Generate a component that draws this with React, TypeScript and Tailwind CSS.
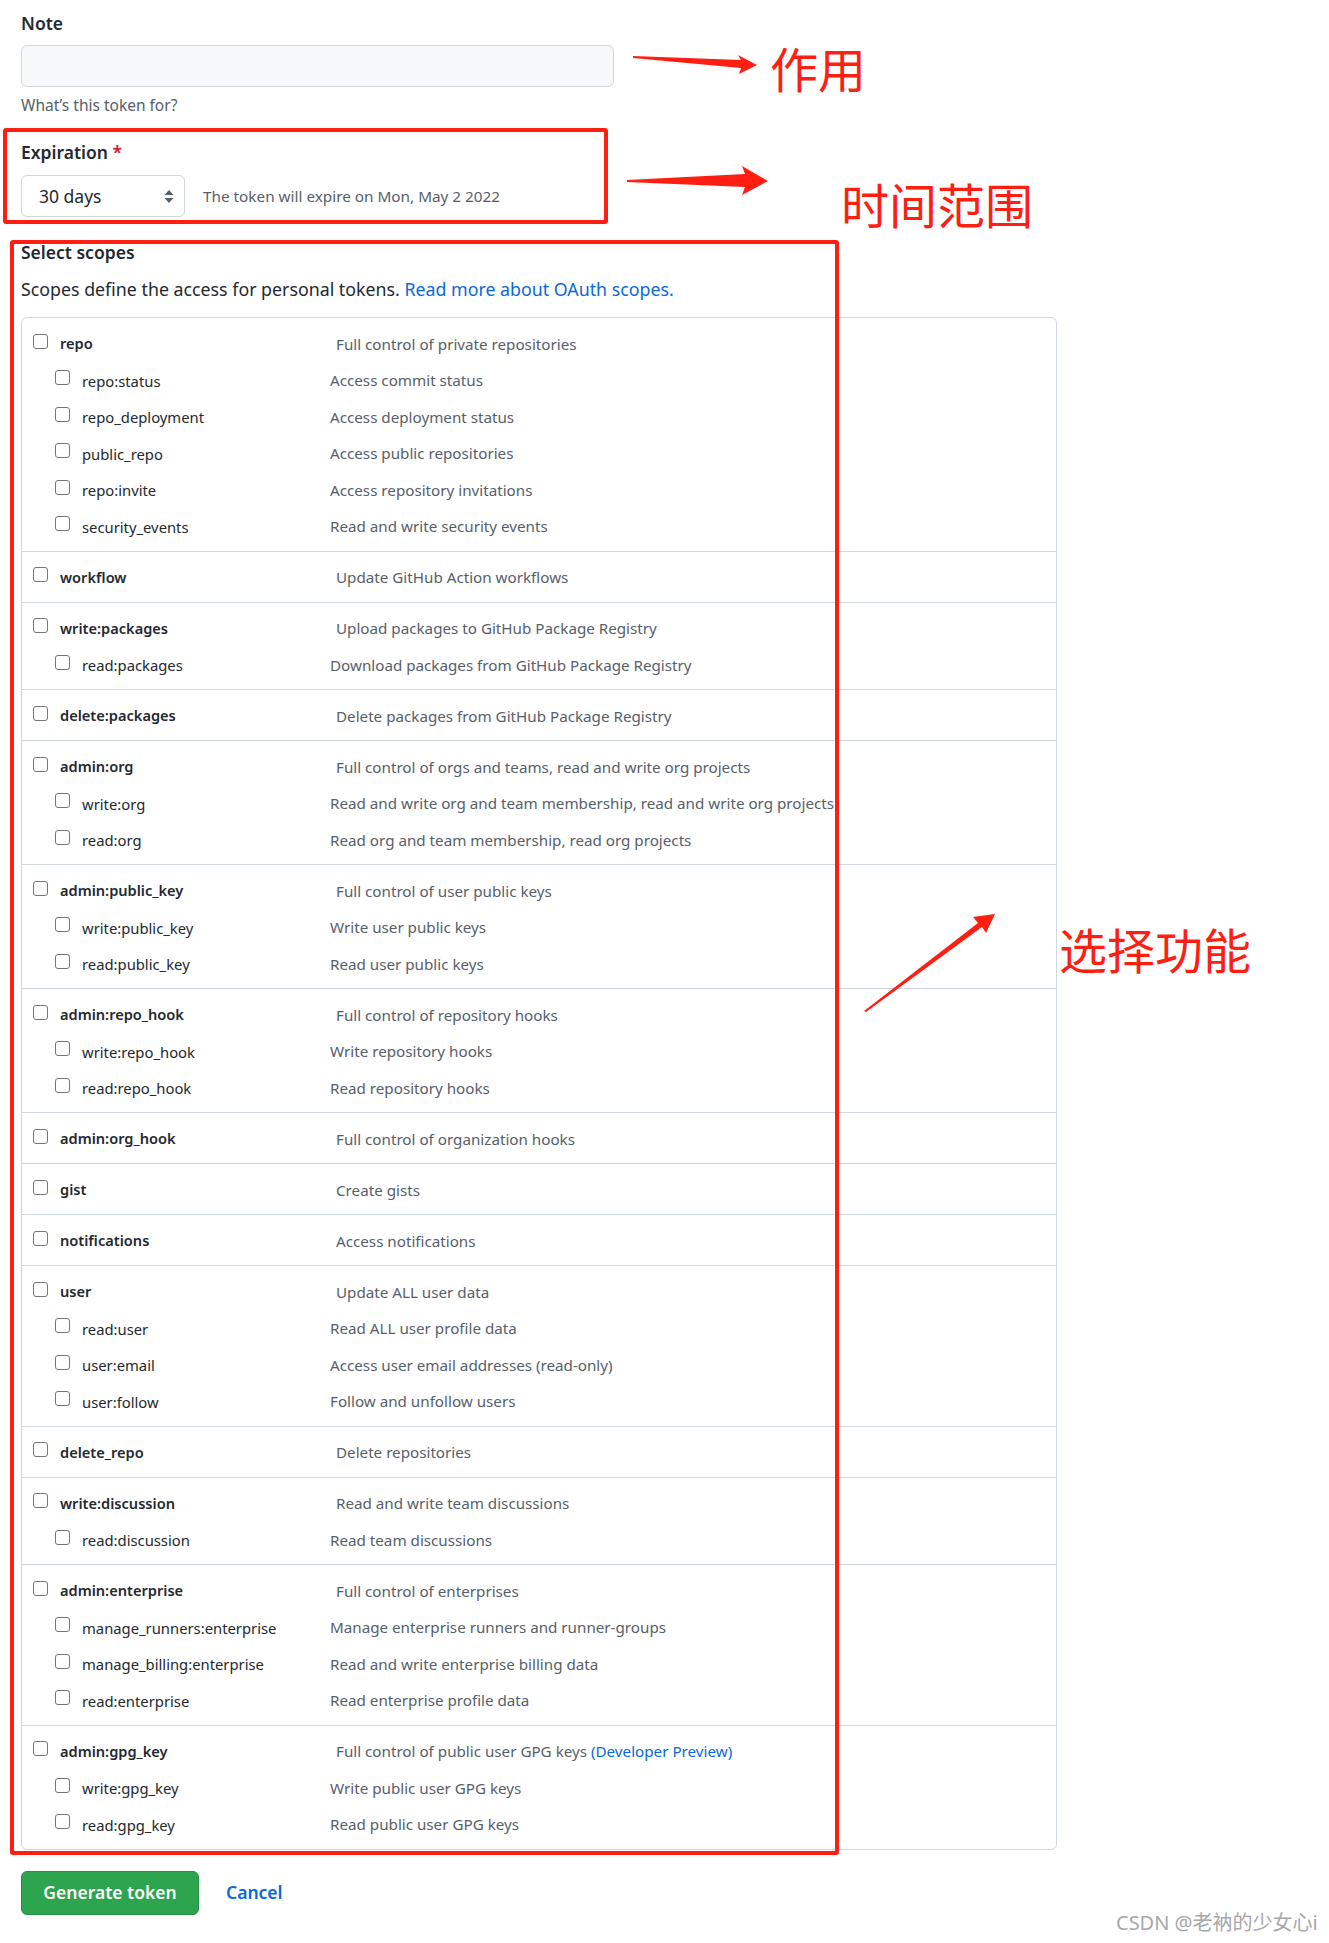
import React from 'react';

type Scope = { name: string; desc: React.ReactNode; subs?: { name: string; desc: string }[] };

const scopes: Scope[] = [
  {
    name: 'repo',
    desc: 'Full control of private repositories',
    subs: [
      { name: 'repo:status', desc: 'Access commit status' },
      { name: 'repo_deployment', desc: 'Access deployment status' },
      { name: 'public_repo', desc: 'Access public repositories' },
      { name: 'repo:invite', desc: 'Access repository invitations' },
      { name: 'security_events', desc: 'Read and write security events' },
    ],
  },
  { name: 'workflow', desc: 'Update GitHub Action workflows' },
  {
    name: 'write:packages',
    desc: 'Upload packages to GitHub Package Registry',
    subs: [{ name: 'read:packages', desc: 'Download packages from GitHub Package Registry' }],
  },
  { name: 'delete:packages', desc: 'Delete packages from GitHub Package Registry' },
  {
    name: 'admin:org',
    desc: 'Full control of orgs and teams, read and write org projects',
    subs: [
      { name: 'write:org', desc: 'Read and write org and team membership, read and write org projects' },
      { name: 'read:org', desc: 'Read org and team membership, read org projects' },
    ],
  },
  {
    name: 'admin:public_key',
    desc: 'Full control of user public keys',
    subs: [
      { name: 'write:public_key', desc: 'Write user public keys' },
      { name: 'read:public_key', desc: 'Read user public keys' },
    ],
  },
  {
    name: 'admin:repo_hook',
    desc: 'Full control of repository hooks',
    subs: [
      { name: 'write:repo_hook', desc: 'Write repository hooks' },
      { name: 'read:repo_hook', desc: 'Read repository hooks' },
    ],
  },
  { name: 'admin:org_hook', desc: 'Full control of organization hooks' },
  { name: 'gist', desc: 'Create gists' },
  { name: 'notifications', desc: 'Access notifications' },
  {
    name: 'user',
    desc: 'Update ALL user data',
    subs: [
      { name: 'read:user', desc: 'Read ALL user profile data' },
      { name: 'user:email', desc: 'Access user email addresses (read-only)' },
      { name: 'user:follow', desc: 'Follow and unfollow users' },
    ],
  },
  { name: 'delete_repo', desc: 'Delete repositories' },
  {
    name: 'write:discussion',
    desc: 'Read and write team discussions',
    subs: [{ name: 'read:discussion', desc: 'Read team discussions' }],
  },
  {
    name: 'admin:enterprise',
    desc: 'Full control of enterprises',
    subs: [
      { name: 'manage_runners:enterprise', desc: 'Manage enterprise runners and runner-groups' },
      { name: 'manage_billing:enterprise', desc: 'Read and write enterprise billing data' },
      { name: 'read:enterprise', desc: 'Read enterprise profile data' },
    ],
  },
  {
    name: 'admin:gpg_key',
    desc: (
      <>
        Full control of public user GPG keys <span className="text-[#0969da]">(Developer Preview)</span>
      </>
    ),
    subs: [
      { name: 'write:gpg_key', desc: 'Write public user GPG keys' },
      { name: 'read:gpg_key', desc: 'Read public user GPG keys' },
    ],
  },
];

const Checkbox = () => (
  <span className="block h-[15px] w-[15px] shrink-0 -translate-y-[3px] rounded-[3px] border border-[#767676] bg-white" />
);

const Row = ({ name, desc, sub }: { name: string; desc: React.ReactNode; sub?: boolean }) => (
  <div className="flex h-[36.5px] items-center whitespace-nowrap">
    <div className={sub ? 'flex w-[308px] items-center pl-[33px]' : 'flex w-[314px] items-center pl-[11px]'}>
      <Checkbox />
      <span
        className={
          sub
            ? 'ml-[12px] text-[14.8px] text-[#24292f]'
            : 'ml-[12px] text-[14.6px] font-semibold text-[#24292f]'
        }
      >
        {name}
      </span>
    </div>
    <span className="text-[15.2px] text-[#57606a]">{desc}</span>
  </div>
);

const Annotations = () => (
  <>
    <div className="pointer-events-none absolute left-[3px] top-[128px] h-[96px] w-[605px] rounded-[3px] border-[4px] border-[#ff1e12]" />
    <div className="pointer-events-none absolute left-[10px] top-[240px] h-[1615px] w-[829px] rounded-[3px] border-[4px] border-[#ff1e12]" />
    <svg className="pointer-events-none absolute left-0 top-0" width="1329" height="1943" viewBox="0 0 1329 1943">
      <polygon fill="#ff1e12" points="633,56 741,60 738,55 757,65 739,74 741,68 633,58" />
      <polygon fill="#ff1e12" points="627,180 745,174 742,166 768,181 742,195 745,187 627,182" />
      <polygon fill="#ff1e12" points="864,1011 978,923 973,917 995,914 986,933 982,927 866,1012" />
    </svg>
    <div className="pointer-events-none absolute left-[770px] top-[43px] font-['Noto_Sans_CJK_SC',sans-serif] text-[48px] leading-none text-[#ff1e12]">
      作用
    </div>
    <div className="pointer-events-none absolute left-[841px] top-[179px] font-['Noto_Sans_CJK_SC',sans-serif] text-[48px] leading-none text-[#ff1e12]">
      时间范围
    </div>
    <div className="pointer-events-none absolute left-[1059px] top-[924px] font-['Noto_Sans_CJK_SC',sans-serif] text-[48px] leading-none text-[#ff1e12]">
      选择功能
    </div>
    <div className="pointer-events-none absolute left-[1116px] top-[1913px] font-['Noto_Sans','Noto_Sans_CJK_SC',sans-serif] text-[20px] leading-none text-[#a8a8a8]">
      CSDN @老衲的少女心i
    </div>
  </>
);

export default function App() {
  return (
    <div className="relative min-h-[1943px] w-[1329px] bg-white px-[21px] pt-[11px] font-['Noto_Sans','Noto_Sans_CJK_SC',sans-serif] text-[#24292f]">
      <div className="text-[17.5px] font-semibold leading-[24px]">Note</div>
      <div className="mt-[10px] h-[42px] w-[593px] rounded-[6px] border border-[#d0d7de] bg-[#f6f8fa]" />
      <div className="mt-[8px] text-[15.5px] leading-[20px] text-[#57606a]">What’s this token for?</div>

      <div className="mt-[25px] text-[17.5px] font-semibold leading-[24px]">
        Expiration <span className="text-[#cf222e]">*</span>
      </div>
      <div className="mt-[11px] flex items-center">
        <div className="flex h-[42px] w-[164px] items-center justify-between rounded-[6px] border border-[#d0d7de] bg-white pl-[17px] pr-[10px]">
          <span className="text-[17.5px]">30 days</span>
          <svg width="10" height="15" viewBox="0 0 10 15">
            <path d="M5 1 L9.5 6 H0.5 Z" fill="#57606a" />
            <path d="M5 14 L9.5 9 H0.5 Z" fill="#57606a" />
          </svg>
        </div>
        <span className="ml-[18px] text-[15.3px] text-[#57606a]">The token will expire on Mon, May 2 2022</span>
      </div>

      <div className="mt-[23px] text-[17.5px] font-semibold leading-[24px]">Select scopes</div>
      <div className="mt-[13px] text-[17.8px] leading-[24px]">
        Scopes define the access for personal tokens.{' '}
        <span className="text-[#0969da]">Read more about OAuth scopes.</span>
      </div>

      <div className="mt-[16px] w-[1036px] rounded-[6px] border border-[#d0d7de]">
        {scopes.map((s, i) => (
          <div key={s.name} className={i === 0 ? 'pb-[5.5px] pt-[8px]' : 'border-t border-[#d0d7de] pb-[5.5px] pt-[8px]'}>
            <Row name={s.name} desc={s.desc} />
            {s.subs?.map((c) => (
              <Row key={c.name} name={c.name} desc={c.desc} sub />
            ))}
          </div>
        ))}
      </div>

      <div className="mt-[21px] flex items-center">
        <button className="h-[44px] w-[178px] rounded-[6px] border border-[#298e46] bg-[#2da44e] text-[17.5px] font-semibold text-white">
          Generate token
        </button>
        <span className="ml-[27px] text-[17.5px] font-semibold text-[#0969da]">Cancel</span>
      </div>

      <Annotations />
    </div>
  );
}
